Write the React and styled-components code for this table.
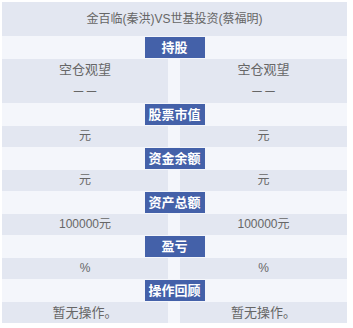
import React from 'react'
import styled, { createGlobalStyle } from 'styled-components'

const GlobalStyle = createGlobalStyle`
  html, body {
    margin: 0;
    padding: 0;
    background: #fff;
  }
  body {
    font-family: "Liberation Sans", "Noto Sans CJK SC", sans-serif;
  }
`

const Panel = styled.div`
  width: 345px;
  margin: 2px 6px 5px 2px;
  background: #f4f6fb;
  color: #666;
`

const Title = styled.div`
  height: 34px;
  line-height: 34px;
  background: #e3e7f1;
  text-align: center;
  font-size: 12px;
`

const Band = styled.div`
  height: 23px;
  display: flex;
  align-items: center;
  justify-content: center;
`

const Label = styled.span`
  display: block;
  width: 60px;
  height: 21px;
  line-height: 21px;
  background: #4461a9;
  color: #fff;
  font-size: 13px;
  font-weight: bold;
  text-align: center;
  white-space: nowrap;
`

const Row = styled.div`
  display: grid;
  grid-template-columns: 166px 167px;
  column-gap: 12px;
`

const Cell = styled.div`
  background: #e3e7f1;
  text-align: center;
  font-size: ${p => (p.large ? '13px' : '12px')};
  line-height: ${p => (p.tall ? '22px' : '21px')};
`

const sections = [
  { label: '持股', values: [['空仓观望', '－－'], ['空仓观望', '－－']], large: true, tall: true },
  { label: '股票市值', values: [['元'], ['元']] },
  { label: '资金余额', values: [['元'], ['元']] },
  { label: '资产总额', values: [['100000元'], ['100000元']] },
  { label: '盈亏', values: [['%'], ['%']] },
  { label: '操作回顾', values: [['暂无操作。'], ['暂无操作。']], large: true }
]

const Section = ({ label, values, large, tall }) =>
  <>
    <Band><Label>{label}</Label></Band>
    <Row>
      {values.map((lines, i) =>
        <Cell key={i} large={large} tall={tall}>
          {lines.map((t, j) => <div key={j}>{t}</div>)}
        </Cell>
      )}
    </Row>
  </>

const App = () =>
  <>
    <GlobalStyle />
    <Panel>
      <Title>金百临(秦洪)VS世基投资(蔡福明)</Title>
      {sections.map(s => <Section key={s.label} {...s} />)}
    </Panel>
  </>

export default App
